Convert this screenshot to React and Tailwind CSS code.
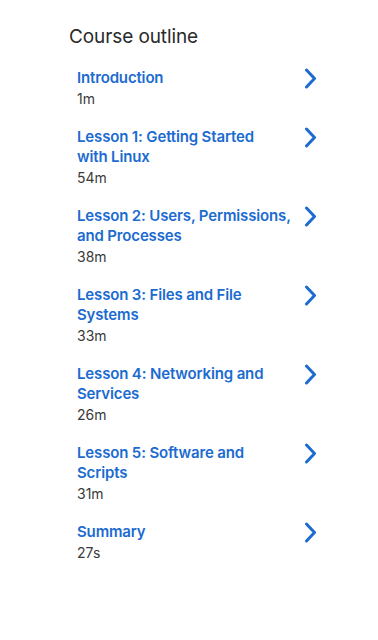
const lessons = [
  { title: 'Introduction', duration: '1m' },
  { title: 'Lesson 1: Getting Started with\u00a0Linux', duration: '54m' },
  { title: 'Lesson 2: Users, Permissions, and Processes', duration: '38m' },
  { title: 'Lesson 3: Files and File Systems', duration: '33m' },
  { title: 'Lesson 4: Networking and Services', duration: '26m' },
  { title: 'Lesson 5: Software and Scripts', duration: '31m' },
  { title: 'Summary', duration: '27s' },
]

function Chevron() {
  return (
    <svg width="13" height="21" viewBox="0 0 13 21" fill="none" className="shrink-0">
      <path d="M2.5 2 L10.5 10.5 L2.5 19" stroke="#1b6bd0" strokeWidth="3" strokeLinecap="round" strokeLinejoin="round" />
    </svg>
  )
}

export default function App() {
  return (
    <div className="min-h-[640px] bg-white pt-[25px] pl-[69px] pr-[61px]" style={{ fontFamily: 'Inter, "Open Sans", sans-serif' }}>
      <h2 className="text-[19px] leading-[24px] text-[#2a2a2a] tracking-[-0.1px]">Course outline</h2>

      <ul className="mt-[19px] flex flex-col gap-[18px] pl-[8px]">
        {lessons.map(l => (
          <li key={l.title} className="flex items-start justify-between">
            <div className="w-[216px]">
              <div className="text-[15px] leading-[20px] font-semibold text-[#1b6bd0] tracking-[-0.15px]">{l.title}</div>
              <div className="mt-[1px] text-[14px] leading-[20px] text-[#3a3a3a]">{l.duration}</div>
            </div>
            <Chevron />
          </li>
        ))}
      </ul>
    </div>
  )
}
